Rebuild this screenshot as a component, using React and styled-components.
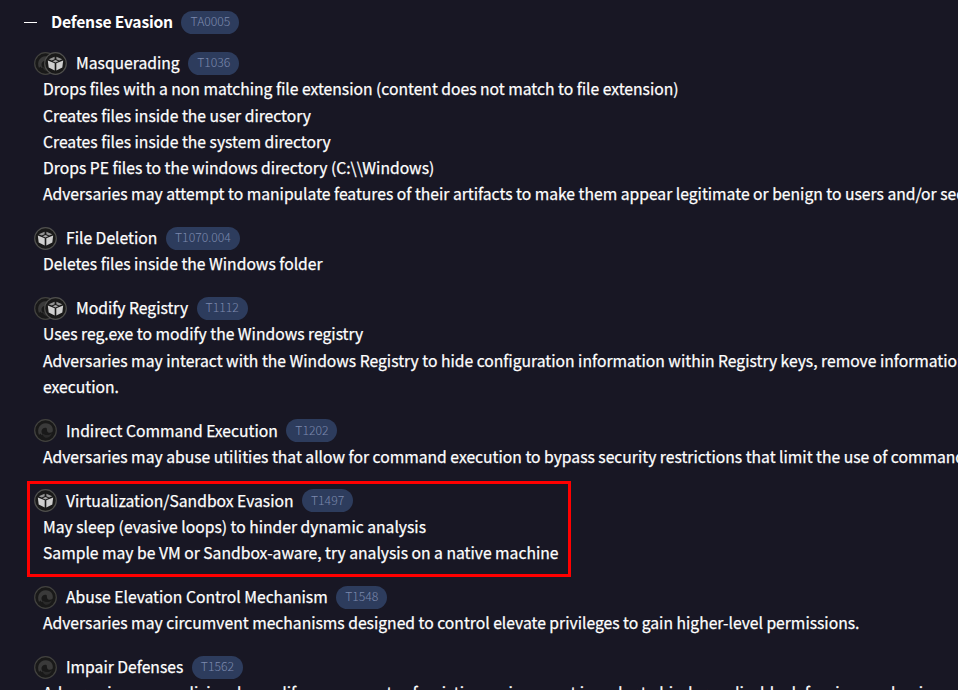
import React from "react";
import styled, { createGlobalStyle } from "styled-components";

const GlobalStyle = createGlobalStyle`
  * { box-sizing: border-box; }
  html, body { margin: 0; background: #181724; overflow: hidden; }
`;

const Page = styled.main`
  width: 958px;
  height: 690px;
  overflow: hidden;
  background: #181724;
  color: #fff;
  font-family: "Noto Sans CJK SC", "Noto Sans", sans-serif;
  font-size: 15.68px;
  font-weight: 400;
  line-height: 26.25px;
  white-space: nowrap;
  -webkit-text-stroke: 0.25px currentColor;
`;

const TacticHeader = styled.header`
  display: flex;
  align-items: center;
  height: 26px;
  margin-top: 9px;
  padding-left: 24px;
`;

const Collapse = styled.span`
  width: 13px;
  height: 1px;
  margin-right: 14px;
  background: #fff;
`;

const TacticName = styled.h1`
  margin: 0;
  font-size: inherit;
  font-weight: 700;
  letter-spacing: -0.22px;
  -webkit-text-stroke: 0;
`;

const Badge = styled.span`
  display: flex;
  align-items: center;
  justify-content: center;
  width: ${(p) => p.$width || 51}px;
  height: 23px;
  margin-left: 8.6px;
  border-radius: 12px;
  background: #2d3c5d;
  color: #7c89ad;
  font-size: 12.2px;
  font-weight: 300;
  line-height: 20px;
  padding-bottom: 2px;
  -webkit-text-stroke: 0;
`;

const Techniques = styled.div`
  display: flex;
  flex-direction: column;
  gap: 17.53px;
  padding: 15.15px 0 0 34px;
`;

const Technique = styled.section`
  display: flex;
  flex-direction: column;
`;

const TechniqueHeader = styled.div`
  display: flex;
  align-items: center;
  height: 26.25px;
`;

const Icons = styled.span`
  display: flex;
  margin-right: 9px;
  svg { display: block; width: 23px; height: 23px; }
  svg + svg { margin-left: -13px; }
`;

const TechniqueName = styled.h2`
  margin: 0;
  font-size: inherit;
  font-weight: inherit;
`;

const Line = styled.p`
  margin: 0;
  padding-left: 9px;
  height: 26.25px;
`;

const Highlight = styled.div`
  margin: -7px 0 -10.2px -7px;
  padding: 4px 0 7.2px 4px;
  width: 544px;
  border: 3px solid #f00;
`;

const SwirlIcon = () => (
  <svg viewBox="0 0 23 23">
    <circle cx="11.5" cy="11.5" r="10.8" fill="#191919" stroke="#42423f" strokeWidth="1.2" />
    <path d="M5 16C2.500 9.500 6 4.500 11.500 4.200c5-.2 8.200 4 7.200 8.300-1.700 1.700-4.500 1.700-5.500-.3-.7-1.500.2-3-1.200-3.400-2.500-.5-4.700 1.500-4.500 4 .1 1.400.8 2.500 1.500 3.500-1.200-.2-2-.9-2.600-1.800Z" fill="#3a3a3a" />
    <path d="M8.500 14c2 2.800 6.500 2.700 9.500.2-1.500 3.500-4.300 5-6.500 4.500-1.800-.5-3-2.500-3-4.700Z" fill="#2a2a2a" />
  </svg>
);

const CubeIcon = () => (
  <svg viewBox="0 0 23 23">
    <circle cx="11.5" cy="11.5" r="10.8" fill="#191919" stroke="#50504e" strokeWidth="1.2" />
    <path d="m3.800 8.500 6.900 2.700v7.300l-6-3Z" fill="#cfcfcf" />
    <path d="m19.200 8.500-6.900 2.700v7.300l6-3Z" fill="#cfcfcf" />
    <path d="m4.700 7.300 5.900-2.500v2.400L7.800 8.600Zm13.600 0-5.900-2.500v2.400l2.800 1.400Z" fill="#959595" />
    <path d="m8.600 9.200 2.900-1.300 2.900 1.300-2.900 1.200Z" fill="#a8a8a8" />
  </svg>
);

const techniques = [
  {
    name: "Masquerading", id: "T1036", icons: ["swirl", "cube"],
    lines: [
      "Drops files with a non matching file extension (content does not match to file extension)",
      "Creates files inside the user directory",
      "Creates files inside the system directory",
      "Drops PE files to the windows directory (C:\\\\Windows)",
      "Adversaries may attempt to manipulate features of their artifacts to make them appear legitimate or benign to users and/or security tools.",
    ],
  },
  { name: "File Deletion", id: "T1070.004", width: 74, icons: ["cube"], lines: ["Deletes files inside the Windows folder"] },
  {
    name: "Modify Registry", id: "T1112", icons: ["swirl", "cube"],
    lines: [
      "Uses reg.exe to modify the Windows registry",
      "Adversaries may interact with the Windows Registry to hide configuration information within Registry keys, remove information",
      "execution.",
    ],
  },
  {
    name: "Indirect Command Execution", id: "T1202", icons: ["swirl"],
    lines: ["Adversaries may abuse utilities that allow for command execution to bypass security restrictions that limit the use of command-line"],
  },
  {
    name: "Virtualization/Sandbox Evasion", id: "T1497", icons: ["cube"], highlighted: true,
    lines: ["May sleep (evasive loops) to hinder dynamic analysis", "Sample may be VM or Sandbox-aware, try analysis on a native machine"],
  },
  {
    name: "Abuse Elevation Control Mechanism", id: "T1548", icons: ["swirl"],
    lines: ["Adversaries may circumvent mechanisms designed to control elevate privileges to gain higher-level permissions."],
  },
  {
    name: "Impair Defenses", id: "T1562", icons: ["swirl"],
    lines: ["Adversaries may maliciously modify components of a victim environment in order to hinder or disable defensive mechanisms."],
  },
];

function TechniqueItem({ item }) {
  const body = (
    <Technique>
      <TechniqueHeader>
        <Icons>{item.icons.map((i) => (i === "cube" ? <CubeIcon key={i} /> : <SwirlIcon key={i} />))}</Icons>
        <TechniqueName>{item.name}</TechniqueName>
        <Badge $width={item.width}>{item.id}</Badge>
      </TechniqueHeader>
      {item.lines.map((l) => <Line key={l}>{l}</Line>)}
    </Technique>
  );
  return item.highlighted ? <Highlight>{body}</Highlight> : body;
}

export default function App() {
  return (
    <>
      <GlobalStyle />
      <Page>
        <TacticHeader>
          <Collapse />
          <TacticName>Defense Evasion</TacticName>
          <Badge $width={58}>TA0005</Badge>
        </TacticHeader>
        <Techniques>
          {techniques.map((t) => <TechniqueItem key={t.id} item={t} />)}
        </Techniques>
      </Page>
    </>
  );
}
